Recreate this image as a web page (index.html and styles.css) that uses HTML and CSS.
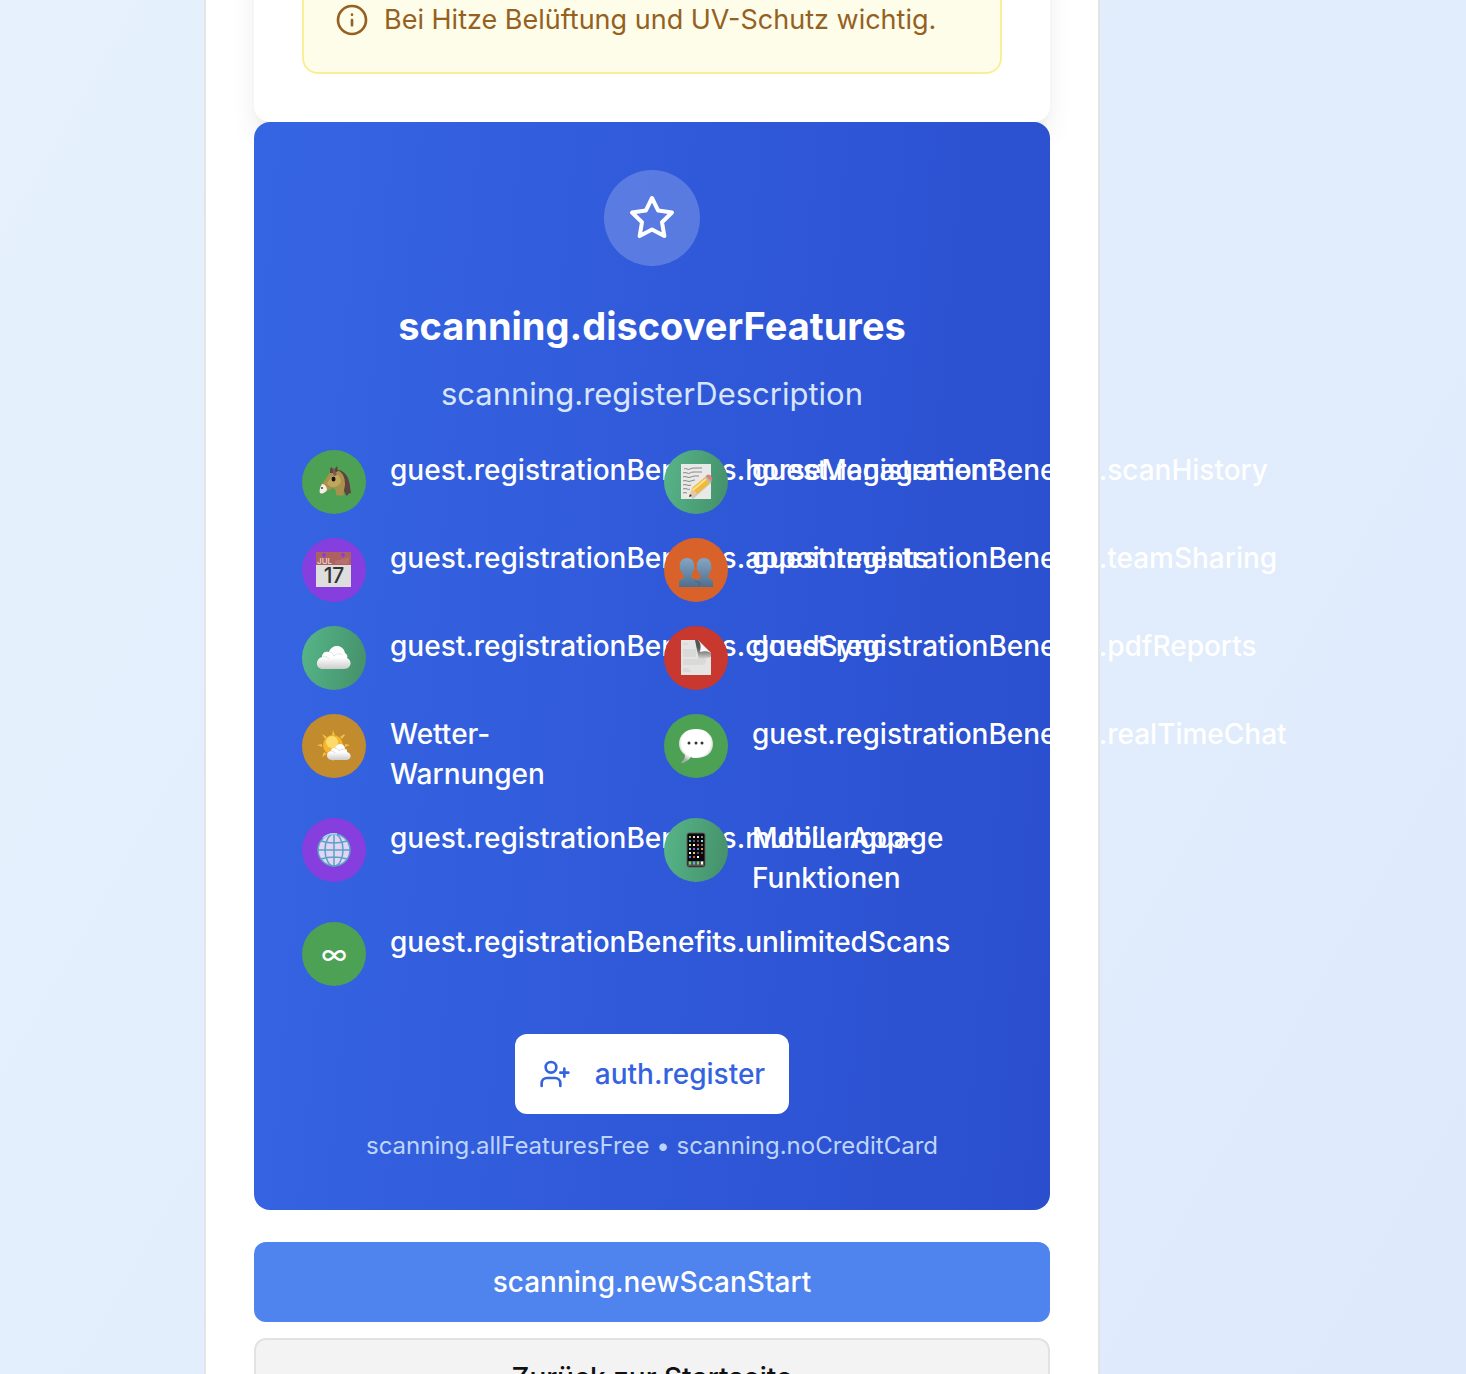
FILE: index.html
```html
<!DOCTYPE html>
<html lang="de">
<head>
  <meta charset="utf-8">
  <meta name="viewport" content="width=device-width, initial-scale=1">
  <title>Scan</title>
  <link rel="stylesheet" href="styles.css">
</head>
<body>
  <div class="page">
    <main class="panel">
      <section class="weather-card">
        <p class="notice">
          <svg class="notice-icon" viewBox="0 0 24 24" fill="none" stroke="currentColor" stroke-width="2" stroke-linecap="round" stroke-linejoin="round">
            <circle cx="12" cy="12" r="10.5"/>
            <path d="M12 16v-4M12 8h.01"/>
          </svg>
          <span>Bei Hitze Belüftung und UV-Schutz wichtig.</span>
        </p>
      </section>

      <section class="features">
        <div class="star">
          <svg viewBox="0 0 24 24" fill="none" stroke="currentColor" stroke-width="2" stroke-linecap="round" stroke-linejoin="round">
            <path d="M12 2l3.09 6.26L22 9.27l-5 4.87 1.18 6.88L12 17.77l-6.18 3.25L7 14.14 2 9.27l6.91-1.01L12 2z"/>
          </svg>
        </div>
        <h2>scanning.discoverFeatures</h2>
        <p class="description">scanning.registerDescription</p>

        <ul class="benefits">
          <li>
            <span class="icon green">
              <svg viewBox="0 0 36 36">
                <path d="M19 6c5-1 10 2 13 8 2 5 2 10 3 15-2 0-3 1-4 3-2-2-3-6-5-9z" fill="#5d4240"/>
                <path d="M14 8c1-2 4-3 7-2 6 2 8 8 8 14 0 4-2 7-1 11-2 1-5 1-8 0 0-3 0-6-3-7-3 1-5 3-8 4-2 2-4 2-5 1-1-3 0-6 2-9 3-4 6-8 8-12z" fill="#a8914c"/>
                <path d="M17 11c5-2 8 2 8 7-2 4-5 5-8 5s-5-2-6-4z" fill="#bfa75f"/>
                <path d="M14 9c0-3 0-5 1-6l3 3 3-4 1 5-3 2z" fill="#5d4240"/>
                <path d="M17 4c-1 3 0 6 1 8l3-1c-1-2-2-4-2-6z" fill="#7c5a50"/>
                <path d="M6 20c3 0 5 3 5 6-2 3-5 4-7 3-1-2 0-6 2-9z" fill="#f3f0ec"/>
                <ellipse cx="17.500" cy="15" rx="2" ry="2.500" fill="#17120f"/>
                <circle cx="6" cy="24" r="1" fill="#4a4038"/>
              </svg>
            </span>
            <span class="label">guest.registrationBenefits.horseManagement</span>
          </li>
          <li>
            <span class="icon teal">
              <svg viewBox="0 0 36 36">
                <path d="M3 0h30v35H3z" fill="#e9e9e7"/>
                <path d="M6 5q2-1 3 0t3 0 4-1 4 0 4 0M5 9q2-1 4 0t3 0 4-1 4 0 4 0M5 13q2-1 4 0t4 0 4-1 4 0M5 17q2-1 4 0t4 0 4-1M5 21q2-1 4 0t4 0M5 25q2-1 4 0t3 0M5 29q2-1 4 0" fill="none" stroke="#888" stroke-width="1"/>
                <path d="M14 34L32 18" stroke="#999" stroke-width="3" opacity=".4"/>
                <path d="M11 33l3-9 5 6z" fill="#e9c79a"/>
                <path d="M14 24L27 13l5 6-13 11z" fill="#f0b93b"/>
                <path d="M15 26L28 15" stroke="#fbe38a" stroke-width="2"/>
                <path d="M27 13l2-2 5 6-2 2z" fill="#a9b5bd"/>
                <path d="M29 11c2-2 6 2 5 5l-1 1-5-5z" fill="#e87a82"/>
                <path d="M11 33l1-3 2 2z" fill="#333"/>
              </svg>
            </span>
            <span class="label">guest.registrationBenefits.scanHistory</span>
          </li>
          <li>
            <span class="icon purple">
              <svg viewBox="0 0 36 36">
                <path d="M0 0h35v35H0z" fill="#dedede"/>
                <path d="M0 0h35v13H0z" fill="#ad625f"/>
                <path d="M8 1v4M6 3h4M27 1v4M25 3h4" stroke="#863ede" stroke-width="2"/>
                <path d="M20 9v3M22 8v4M24 8v4M26 7v5M28 7v5M30 6v6M32 6v6" stroke="#bd7d7a" stroke-width="1"/>
                <text x="1" y="12" class="cal-month">JUL</text>
                <text x="18" y="31" class="cal-day">17</text>
              </svg>
            </span>
            <span class="label">guest.registrationBenefits.appointments</span>
          </li>
          <li>
            <span class="icon orange">
              <svg viewBox="0 0 36 36">
                <defs>
                  <linearGradient id="people" x2="0" y2="1"><stop stop-color="#84a5c3"/><stop offset="1" stop-color="#4f6f8d"/></linearGradient>
                </defs>
                <path d="M9 6c5 0 8 4 7 9 1 1 1 3-1 4 0 3-1 4-2 5 0 3 6 2 7 6v5H1v-5c1-4 6-3 5-6-1-1-2-2-3-5-1-1-2-3-1-4-1-5 2-9 7-9z" fill="url(#people)"/>
                <path d="M26 6c5 0 8 4 7 9 1 1 1 3-1 4 0 3-1 4-2 5 0 3 4 2 5 6v5H19l-2-5c2-3 6-3 6-6-1-1-2-2-3-5-1-1-2-3-1-4-1-5 2-9 7-9z" fill="url(#people)"/>
                <path d="M17 29l5 2-1 3" fill="none" stroke="#456580"/>
              </svg>
            </span>
            <span class="label">guest.registrationBenefits.teamSharing</span>
          </li>
          <li>
            <span class="icon teal">
              <svg viewBox="0 0 36 36">
                <defs>
                  <linearGradient id="cloud" x2="0" y2="1"><stop offset=".5" stop-color="#fff"/><stop offset="1" stop-color="#ccc"/></linearGradient>
                </defs>
                <path d="M7 29c-8 0-8-10-1-12 0-4 3-6 7-5 3-8 14-8 16 1 2 1 3 3 2 5 6 3 4 11-3 11z" fill="url(#cloud)"/>
                <path d="M7 17c3-1 5 0 6 2M13 12c3 0 4 2 5 4 3-3 7-3 9-1" fill="none" stroke="#e4e4e4"/>
              </svg>
            </span>
            <span class="label">guest.registrationBenefits.cloudSync</span>
          </li>
          <li>
            <span class="icon red">
              <svg viewBox="0 0 36 36">
                <defs>
                  <linearGradient id="fold" x2="0" y2="1"><stop offset=".4" stop-color="#555"/><stop offset="1" stop-color="#e4e4e2"/></linearGradient>
                </defs>
                <path d="M3 0h17l13 13v22H3z" fill="#e4e4e2"/>
                <path d="M5 4h5M5 10h13M5 12h13M5 14h13M5 16h13M5 20h23M5 22h23M5 24h22M5 29h6M5 31h8" stroke="#cfcfcf"/>
                <path d="M17 0h3l13 13v4l-12 3z" fill="url(#fold)"/>
                <path d="M20 0l13 13c-3-2-7-2-11-1 1-5 1-9-2-12z" fill="#f5f5f5"/>
              </svg>
            </span>
            <span class="label">guest.registrationBenefits.pdfReports</span>
          </li>
          <li>
            <span class="icon amber">
              <svg viewBox="0 0 36 36">
                <path d="M17 2l2 5h-3zM28 6l1 1-3 4-2-2zM6 6l5 3-2 2zM1 17l5-1v3zM34 17l-5-1v3zM6 29l2-5 3 2zM17 34l-1-5h3z" fill="#f3bd42"/>
                <circle cx="17" cy="17" r="10" fill="#f5b52e"/>
                <circle cx="16" cy="14" r="6" fill="#fbdc6a"/>
                <path d="M16 32c-6 0-7-8-1-9 0-3 3-4 4-3 2-6 10-5 10 1 2 0 2 1 2 3 5 1 5 8-1 8z" fill="url(#cloud)"/>
                <path d="M15 23c2 0 3 0 4 2M19 20c2 0 3 1 4 3 2-2 4-2 6-1" fill="none" stroke="#ddd"/>
              </svg>
            </span>
            <span class="label">Wetter-Warnungen</span>
          </li>
          <li>
            <span class="icon green">
              <svg viewBox="0 0 36 36">
                <defs>
                  <radialGradient id="bubble" cy=".4" r=".6"><stop offset=".7" stop-color="#fff"/><stop offset="1" stop-color="#aaa"/></radialGradient>
                </defs>
                <path d="M18 1c10 0 17 6 17 15s-7 14-17 14c-2 0-4 0-5-1-3 4-7 6-10 6 2-2 4-5 4-8-4-3-6-7-6-11C1 7 8 1 18 1z" fill="url(#bubble)"/>
                <g fill="#333"><circle cx="11" cy="15" r="1.5"/><circle cx="18" cy="15" r="1.5"/><circle cx="24" cy="15" r="1.5"/></g>
              </svg>
            </span>
            <span class="label">guest.registrationBenefits.realTimeChat</span>
          </li>
          <li>
            <span class="icon purple">
              <svg viewBox="0 0 36 36" fill="none" stroke="#5ba3c4" stroke-width="1.5">
                <circle cx="18" cy="18" r="16" fill="#e3d5f5"/>
                <ellipse cx="18" cy="18" rx="9" ry="16"/>
                <path d="M18 2v32M2 18h32M5 9q13 4 26 0M5 27q13-4 26 0"/>
                <path d="M7 6a16 16 0 0 1 14-4" stroke="#a6dcec"/>
              </svg>
            </span>
            <span class="label">guest.registrationBenefits.multiLanguage</span>
          </li>
          <li>
            <span class="icon teal">
              <svg viewBox="0 0 36 36">
                <rect x="9" y="1" width="18" height="34" rx="2" fill="#080808" stroke="#665c5c"/>
                <g fill="none" stroke-width="2">
                  <path d="M11 5h2" stroke="#67cf58"/><path d="M15 5h2M19 5h2" stroke="#e5d5ea"/><path d="M23 5h2" stroke="#888"/>
                  <path d="M11 9h2" stroke="#45a0e6"/><path d="M15 9h2M19 9h2" stroke="#555"/><path d="M23 9h2" stroke="#7edce8"/>
                  <path d="M11 13h2" stroke="#e6df70"/><path d="M15 13h2" stroke="#fff"/><path d="M19 13h2" stroke="#e35b4c"/><path d="M23 13h2" stroke="#777"/>
                  <path d="M11 17h2" stroke="#69d3d0"/><path d="M15 17h2" stroke="#b14bd0"/><path d="M19 17h2" stroke="#3e92e5"/><path d="M23 17h2" stroke="#e8912e"/>
                  <path d="M11 21h2" stroke="#fff"/><path d="M15 21h2" stroke="#e5d05c"/><path d="M19 21h2M23 21h2" stroke="#555"/>
                  <path d="M11 25h2" stroke="#3e92e5"/><path d="M15 25h2" stroke="#df5342"/><path d="M19 25h2" stroke="#fff"/>
                </g>
                <path d="M10 29h16v5H10z" fill="#555"/>
                <path d="M11 31h2M19 31h2" stroke="#70d967" stroke-width="3"/>
                <path d="M15 31h2" stroke="#55b4ef" stroke-width="3"/>
                <path d="M23 31h2" stroke="#fff" stroke-width="3"/>
              </svg>
            </span>
            <span class="label">Mobile App-Funktionen</span>
          </li>
          <li>
            <span class="icon green">∞</span>
            <span class="label">guest.registrationBenefits.unlimitedScans</span>
          </li>
        </ul>

        <button type="button" class="btn btn-register">
          <svg viewBox="0 0 24 24" fill="none" stroke="currentColor" stroke-width="2" stroke-linecap="round" stroke-linejoin="round">
            <path d="M16 21v-2a4 4 0 0 0-4-4H6a4 4 0 0 0-4 4v2"/>
            <circle cx="9" cy="7" r="4"/>
            <path d="M19 8v6M22 11h-6"/>
          </svg>
          auth.register
        </button>
        <p class="footnote">scanning.allFeaturesFree • scanning.noCreditCard</p>
      </section>

      <div class="actions">
        <button type="button" class="btn btn-primary">scanning.newScanStart</button>
        <button type="button" class="btn btn-secondary">Zurück zur Startseite</button>
      </div>
    </main>
  </div>
</body>
</html>
```
FILE: styles.css
```css
* {
  box-sizing: border-box;
}
body {
  font-family: Inter, "Liberation Sans", sans-serif;
  font-size: 28px;
  line-height: 40px;
  margin: 0;
  height: 100vh;
  overflow: hidden;
  background: linear-gradient(120deg, #e6f1fd, #deeafc);
}
h2, p, ul {
  margin: 0;
  padding: 0;
}
.page {
  display: grid;
  grid-template-columns: 204fr minmax(0, 896px) 366fr;
}
.panel {
  grid-column: 2;
  padding: 0 48px 48px;
  background-color: #fff;
  border: 2px solid #e4e4e6;
  border-top: 0;
}
/* the card runs on above the visible part of the page */
.weather-card {
  margin-top: -160px;
  padding: 160px 48px 48px;
  background-color: #fff;
  border-radius: 16px;
  box-shadow: 0 20px 30px -6px rgba(0, 0, 0, 0.1), 0 8px 12px -8px rgba(0, 0, 0, 0.1);
}
.notice {
  display: flex;
  align-items: center;
  gap: 16px;
  padding: 0 32px 32px;
  font-size: 27px;
  color: #956122;
  background-color: #fefdea;
  border: 2px solid #faef98;
  border-top: 0;
  border-radius: 0 0 16px 16px;
}
.notice-icon {
  width: 32px;
  height: 32px;
}
.features {
  position: relative;
  display: flex;
  flex-direction: column;
  align-items: center;
  padding: 48px;
  color: #fff;
  background: linear-gradient(95deg, #3665e4, #2a4ece);
  border-radius: 16px;
}
.star {
  display: flex;
  align-items: center;
  justify-content: center;
  width: 96px;
  height: 96px;
  margin-bottom: 32px;
  border-radius: 50%;
  background-color: rgba(255, 255, 255, 0.2);
}
.star svg {
  width: 48px;
  height: 48px;
}
.features h2 {
  margin-bottom: 16px;
  font-size: 38px;
  font-weight: 700;
  line-height: 56px;
}
.description {
  margin-bottom: 32px;
  font-size: 31px;
  line-height: 48px;
  color: #d8e6fc;
}
.benefits {
  display: grid;
  grid-template-columns: repeat(2, minmax(0, 1fr));
  gap: 24px;
  width: 100%;
  margin-bottom: 48px;
  list-style: none;
}
.benefits li {
  display: flex;
  align-items: flex-start;
  gap: 24px;
}
.label {
  flex: 1;
  min-width: 0;
  font-weight: 500;
}
.icon {
  position: relative;
  z-index: 1;
  display: flex;
  flex: none;
  align-items: center;
  justify-content: center;
  width: 64px;
  height: 64px;
  border-radius: 50%;
}
.icon svg {
  width: 36px;
  height: 36px;
}
.green {
  background-color: #4ca154;
}
.teal {
  background: linear-gradient(100deg, #57b689, #448f69);
}
.purple {
  background-color: #863ede;
}
.orange {
  background-color: #d9622b;
}
.red {
  background-color: #c8382f;
}
.amber {
  background-color: #c18b2e;
}
.cal-month {
  font-size: 8px;
  font-weight: 600;
  fill: #e6cfce;
}
.cal-day {
  font-size: 21px;
  font-weight: 500;
  text-anchor: middle;
  fill: #333;
}
.btn {
  display: flex;
  align-items: center;
  justify-content: center;
  gap: 24px;
  height: 80px;
  padding: 0 24px;
  font: inherit;
  font-weight: 500;
  border: 0;
  border-radius: 12px;
  cursor: pointer;
}
.btn svg {
  width: 32px;
  height: 32px;
}
.btn-register {
  margin-bottom: 16px;
  color: #3563e0;
  background-color: #fff;
}
.footnote {
  font-size: 24px;
  line-height: 32px;
  color: #bdd5fa;
}
.actions {
  display: flex;
  flex-direction: column;
  gap: 16px;
  margin-top: 32px;
}
.btn-primary {
  color: #fff;
  background-color: #4f83ed;
}
.btn-secondary {
  color: #111;
  background-color: #f3f3f3;
  border: 2px solid #e2e2e2;
}
```
